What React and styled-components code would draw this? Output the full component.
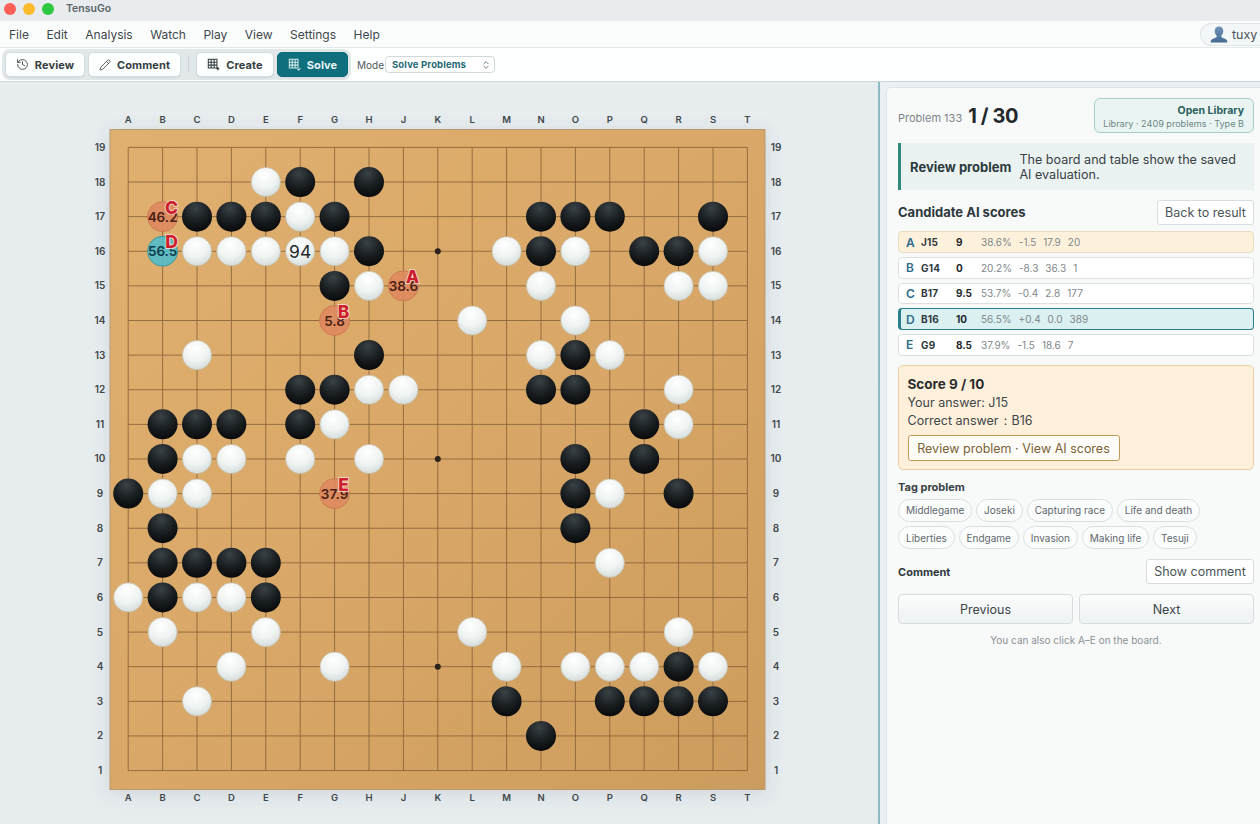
import React from 'react';
import styled, { createGlobalStyle } from 'styled-components';
import { History, Pencil, ChevronsUpDown } from 'lucide-react';

const Global = createGlobalStyle`
  html, body { margin: 0; padding: 0; height: 100%; }
  body { font-family: Inter, "Liberation Sans", sans-serif; color: #2b3236; overflow: hidden; background: #e8edf0; -webkit-font-smoothing: antialiased; }
  #root { height: 100%; }
  * { box-sizing: border-box; }
`;

const Shell = styled.div`
  width: 1260px; height: 824px; display: flex; flex-direction: column; overflow: hidden;
`;
const TitleBar = styled.div`
  height: 21px; background: #e8ecef; display: flex; align-items: center; padding: 0 0 4px 4px; gap: 7px; flex: none;
`;
const Light = styled.span`
  width: 12px; height: 12px; border-radius: 50%; background: ${p => p.$c};
`;
const AppName = styled.span`
  margin-left: 5px; font-size: 10.5px; font-weight: 600; color: #5c6468;
`;
const MenuBar = styled.div`
  height: 27px; background: #fbfdfd; border-bottom: 1px solid #e3e8ea; display: flex; align-items: center; padding-left: 9px; gap: 17.5px; flex: none; position: relative;
`;
const MenuItem = styled.span`
  font-size: 12px; color: #3e474c;
`;
const UserChip = styled.div`
  margin-left: auto; height: 23px; width: 60px; margin-right: 0; border: 1px solid #dfe5e8; border-right: none; border-radius: 12px 0 0 12px; background: #f4f7f8; display: flex; align-items: center; padding-left: 9px; gap: 4px; font-size: 12.5px; color: #4a5358;
`;
const ToolBar = styled.div`
  height: 34px; background: #fdfefe; border-bottom: 1px solid #ced6da; display: flex; align-items: center; padding-left: 2px; flex: none;
`;
const ToolGroup = styled.div`
  height: 31px; background: #e2e8ea; border-radius: 8px; display: flex; align-items: center; padding: 0 3px; gap: 3px;
`;
const ToolButton = styled.button`
  height: 25px; width: ${p => p.$w}px; border-radius: 5px; font-family: inherit; font-size: 11px; font-weight: 700;
  display: flex; align-items: center; justify-content: center; gap: 6px; padding: 0; letter-spacing: .1px;
  border: 1px solid ${p => (p.$active ? '#0d6a76' : '#d5dcdf')};
  background: ${p => (p.$active ? '#0f6f7c' : '#fdfefe')};
  color: ${p => (p.$active ? '#e8f5f6' : '#363e42')};
  box-shadow: 0 1px 1px rgba(40,60,70,.08);
`;
const ToolSep = styled.span`
  width: 1px; height: 17px; background: #ced5d8; margin: 0 4px;
`;
const ModeLabel = styled.span`
  font-size: 10px; color: #50595e; margin-left: 6px;
`;
const ModeSelect = styled.div`
  margin-left: 1px; width: 110px; height: 17px; border: 1px solid #cfd8db; border-radius: 4px; background: #fff; display: flex; align-items: center; justify-content: space-between; padding: 0 3px 0 6px; font-size: 9.5px; font-weight: 700; color: #1f6a76; letter-spacing: .15px;
`;
const Main = styled.div`
  flex: 1; display: flex; min-height: 0;
`;
const BoardArea = styled.div`
  width: 878px; flex: none; background: linear-gradient(180deg, #e8edf0, #e7ecef); padding: 22px 0 0 85px;
`;
const BoardSvg = styled.svg`
  display: block; overflow: visible;
`;
const Splitter = styled.div`
  width: 2px; flex: none; background: #8fb9c1;
`;
const SideWrap = styled.div`
  flex: 1; background: #eaf0f3; padding: 5px 0 0 6px; min-width: 0;
`;
const Side = styled.div`
  height: 100%; background: #f8fafa; border: 1px solid #dfe5e7; border-right: none; border-bottom: none; border-radius: 5px 0 0 0; padding: 10px 6px 0 11px;
`;
const HeadRow = styled.div`
  display: flex; align-items: center; height: 35px;
`;
const ProblemLabel = styled.span`
  font-size: 11px; color: #7d8589; margin-top: 4px;
`;
const Count = styled.span`
  font-size: 20px; font-weight: 700; color: #22282b; margin-left: 6px; letter-spacing: -0.4px;
`;
const LibraryBox = styled.div`
  margin-left: auto; width: 160px; height: 35px; border: 1px solid #a9cdc8; border-radius: 6px; background: #eaf5f3; padding: 5px 9px 0 0; text-align: right;
`;
const LibraryTitle = styled.div`
  font-size: 10.5px; font-weight: 700; color: #2c5f5f; line-height: 13px;
`;
const LibrarySub = styled.div`
  font-size: 9.1px; color: #6c8786; line-height: 13px;
`;
const Notice = styled.div`
  margin-top: 10px; height: 47px; border-left: 3px solid #2f8a7c; background: #ebf3f2; display: flex; align-items: center; padding-left: 9px; gap: 8px;
`;
const NoticeTitle = styled.span`
  font-size: 13px; font-weight: 700; color: #2b3a3c; white-space: nowrap;
`;
const NoticeText = styled.span`
  font-size: 12.6px; line-height: 15px; color: #374145; width: 225px;
`;
const ScoreHead = styled.div`
  display: flex; align-items: center; justify-content: space-between; margin-top: 10px; height: 25px;
`;
const SectionTitle = styled.span`
  font-size: 13px; font-weight: 700; color: #2f383c; margin-top: -1px;
`;
const PlainButton = styled.button`
  width: ${p => p.$w}px; height: 25px; border: 1px solid #d8dee0; border-radius: 3px; background: #fff; font-family: inherit; font-size: 12.5px; color: #4b5559; padding: 0;
`;
const Rows = styled.div`
  display: flex; flex-direction: column; gap: 4px; margin-top: 6px;
`;
const Row = styled.div`
  height: ${p => (p.$tall ? 22 : 21.5)}px; border-radius: 4px; display: flex; align-items: center; font-size: 10px;
  padding-left: ${p => (p.$state === 'best' ? 5 : 7)}px;
  border: 1px solid ${p => (p.$state === 'mine' ? '#ebdcbf' : p.$state === 'best' ? '#2c7f8a' : '#dbe1e3')};
  border-left-width: ${p => (p.$state === 'best' ? 3 : 1)}px;
  background: ${p => (p.$state === 'mine' ? '#fdf1dc' : p.$state === 'best' ? '#daf0f1' : '#fff')};
`;
const RowKey = styled.span`
  width: 15px; font-size: 12px; font-weight: 600; color: #2f6d8a;
`;
const RowMove = styled.span`
  width: 35px; font-weight: 700; color: #30383c; letter-spacing: .2px;
`;
const RowScore = styled.span`
  width: 25px; font-weight: 700; color: #22282b;
`;
const RowStat = styled.span`
  margin-right: 7px; color: #7f878a;
`;
const ScoreBox = styled.div`
  margin-top: 9.5px; height: 105px; border: 1px solid #ebcfa2; border-radius: 5px; background: #fff0dc; padding: 9px 0 0 8.5px;
`;
const ScoreTitle = styled.div`
  font-size: 13.5px; font-weight: 700; color: #2a2d2e; line-height: 18.5px;
`;
const ScoreLine = styled.div`
  font-size: 12.5px; color: #40474a; line-height: 18px;
`;
const ReviewButton = styled.button`
  margin-top: 5.5px; display: block; width: 212px; height: 26px; border: 1px solid #c49a5c; border-radius: 3px; background: #fffdf9; font-family: inherit; font-size: 12.5px; color: #7a6238; padding: 0;
`;
const TagTitle = styled.div`
  margin-top: 10px; font-size: 11px; font-weight: 700; color: #394246; line-height: 14px;
`;
const Tags = styled.div`
  display: flex; flex-wrap: wrap; gap: 4.6px 3.8px; margin-top: 4.5px; width: 330px;
`;
const Tag = styled.span`
  height: 23px; padding: 0 7px; border: 1px solid #d9dfe1; border-radius: 12px; background: #fbfcfc; font-size: 10px; color: #5f686c; display: inline-flex; align-items: center;
`;
const CommentRow = styled.div`
  display: flex; align-items: center; justify-content: space-between; margin-top: 10px; height: 25px;
`;
const CommentLabel = styled.span`
  font-size: 11px; font-weight: 700; color: #2f383c;
`;
const NavRow = styled.div`
  display: flex; gap: 6px; margin-top: 10px;
`;
const NavButton = styled.button`
  flex: 1; height: 30px; border: 1px solid #d6dcdf; border-radius: 4px; background: linear-gradient(180deg, #fbfcfc, #eef2f3); font-family: inherit; font-size: 12.5px; color: #3c4548; padding: 0;
`;
const Hint = styled.div`
  margin-top: 10px; text-align: center; font-size: 10px; color: #8b9295;
`;

const COLS = 'ABCDEFGHJKLMNOPQRST'.split('');
const X0 = 43.2, DX = 34.4, Y0 = 43.4, DY = 34.62;
const BX = 25, BY = 25.5, BW = 655, BH = 660;
const cx = c => X0 + COLS.indexOf(c) * DX;
const cy = r => Y0 + (19 - r) * DY;

const BLACK = 'F18 H18 C17 D17 E17 G17 N17 O17 P17 S17 H16 N16 Q16 R16 G15 H13 O13 F12 G12 N12 O12 B11 C11 D11 F11 Q11 B10 O10 Q10 A9 O9 R9 B8 O8 B7 C7 D7 E7 B6 E6 R4 M3 P3 Q3 R3 S3 N2'.split(' ');
const WHITE = 'E18 F17 C16 D16 E16 G16 M16 O16 S16 H15 N15 R15 S15 L14 O14 C13 N13 P13 H12 J12 R12 G11 R11 C10 D10 F10 H10 B9 C9 P9 P7 A6 C6 D6 B5 E5 L5 R5 D4 G4 M4 O4 P4 Q4 S4 C3'.split(' ');
const STARS = 'D16 K16 Q16 D10 K10 Q10 D4 K4 Q4'.split(' ');
const MARKS = [
  { at: 'J15', v: '38.6', k: 'A', c: '#de8a60', t: '#4a2015' },
  { at: 'G14', v: '5.8', k: 'B', c: '#de8a60', t: '#4a2015' },
  { at: 'B17', v: '46.2', k: 'C', c: '#de8a60', t: '#4a2015' },
  { at: 'B16', v: '56.5', k: 'D', c: '#56bcc6', t: '#0c3a4a' },
  { at: 'G9', v: '37.9', k: 'E', c: '#de8a60', t: '#4a2015' },
];
const parse = s => [s[0], Number(s.slice(1))];

function Board() {
  const rows = Array.from({ length: 19 }, (_, i) => 19 - i);
  const mono = { fontFamily: 'Inter, "Liberation Sans", sans-serif' };
  return (
    <BoardSvg width="710" height="710" viewBox="0 0 710 710">
      <defs>
        <radialGradient id="bs" cx="45%" cy="22%" r="78%">
          <stop offset="0%" stopColor="#3a4245" />
          <stop offset="50%" stopColor="#1c2124" />
          <stop offset="100%" stopColor="#08090a" />
        </radialGradient>
        <radialGradient id="ws" cx="45%" cy="28%" r="78%">
          <stop offset="0%" stopColor="#ffffff" />
          <stop offset="55%" stopColor="#eff3f2" />
          <stop offset="100%" stopColor="#cfd9d7" />
        </radialGradient>
        <linearGradient id="wood" x1="0" y1="0" x2="1" y2="1">
          <stop offset="0%" stopColor="#e0b070" />
          <stop offset="50%" stopColor="#d9a868" />
          <stop offset="100%" stopColor="#cc9c5e" />
        </linearGradient>
        <filter id="bshadow" x="-6%" y="-6%" width="112%" height="112%">
          <feDropShadow dx="0" dy="3" stdDeviation="9" floodColor="#4a5a66" floodOpacity=".16" />
        </filter>
      </defs>
      <rect x={BX} y={BY} width={BW} height={BH} fill="url(#wood)" stroke="#b99a72" strokeWidth="1" filter="url(#bshadow)" />
      {rows.map(r => (
        <line key={r} x1={X0} x2={X0 + 18 * DX} y1={cy(r)} y2={cy(r)} stroke="#8a6236" strokeWidth="1" opacity=".85" />
      ))}
      {COLS.map(c => (
        <line key={c} y1={Y0} y2={Y0 + 18 * DY} x1={cx(c)} x2={cx(c)} stroke="#8a6236" strokeWidth="1" opacity=".85" />
      ))}
      {STARS.map(s => {
        const [c, r] = parse(s);
        return <circle key={s} cx={cx(c)} cy={cy(r)} r="3" fill="#2a2118" />;
      })}
      {COLS.map(c => (
        <g key={c} style={mono} fontSize="9.5" fontWeight="600" fill="#40474a" textAnchor="middle">
          <text x={cx(c)} y="19">{c}</text>
          <text x={cx(c)} y="697">{c}</text>
        </g>
      ))}
      {rows.map(r => (
        <g key={r} style={mono} fontSize="10" fontWeight="600" fill="#40474a" textAnchor="middle">
          <text x="15" y={cy(r) + 3.5}>{r}</text>
          <text x="691" y={cy(r) + 3.5}>{r}</text>
        </g>
      ))}
      {BLACK.map(s => {
        const [c, r] = parse(s);
        return <circle key={s} cx={cx(c)} cy={cy(r)} r="15" fill="url(#bs)" />;
      })}
      {WHITE.map(s => {
        const [c, r] = parse(s);
        return <circle key={s} cx={cx(c)} cy={cy(r)} r="14.6" fill="url(#ws)" stroke="#c5bba6" strokeWidth=".7" />;
      })}
      <circle cx={cx('F')} cy={cy(16)} r="14.6" fill="url(#ws)" stroke="#c5bba6" strokeWidth=".7" />
      <text x={cx('F')} y={cy(16) + 6.5} style={mono} fontSize="17.5" fill="#23292c" textAnchor="middle">94</text>
      {MARKS.map(m => {
        const [c, r] = parse(m.at);
        const x = cx(c), y = cy(r);
        return (
          <g key={m.k}>
            <circle cx={x} cy={y} r="15" fill={m.c} fillOpacity=".93" stroke={m.t === '#0c3a4a' ? '#2f8f9c' : '#c9754e'} strokeWidth=".8" />
            <text x={x} y={y + 5} style={mono} fontSize="13.5" fontWeight="600" fill={m.t} textAnchor="middle">{m.v}</text>
            <text x={x + 9} y={y - 3} style={mono} fontSize="17.5" fontWeight="800" fill="#cf1f2e" stroke="#f4e3d4" strokeWidth="1.6" paintOrder="stroke" textAnchor="middle">{m.k}</text>
          </g>
        );
      })}
    </BoardSvg>
  );
}

const GridGlyph = ({ color, mark }) => (
  <svg width="13" height="13" viewBox="0 0 15 15" fill="none" stroke={color} strokeWidth="1.2">
    <rect x="1.5" y="1.5" width="10" height="10" />
    <path d="M4.8 1.5v10M8.2 1.5v10M1.5 4.8h10M1.5 8.2h10" />
    {mark === 'plus' && <path d="M12.5 10.5v3.5M10.8 12.2h3.4" strokeWidth="1.3" />}
    {mark === 'check' && <path d="M11 13l1.3 1 2-2.5" strokeWidth="1.2" />}
  </svg>
);

const UserGlyph = () => (
  <svg width="18" height="17" viewBox="0 0 18 17">
    <defs>
      <linearGradient id="ug" x1="0" y1="0" x2="0" y2="1">
        <stop offset="0%" stopColor="#6f93b8" />
        <stop offset="100%" stopColor="#456a90" />
      </linearGradient>
    </defs>
    <path fill="url(#ug)" d="M9 .5c2.7 0 4.3 2 4.3 4.6 0 2-.9 3.7-2 4.6v1.2c.3.6 3.9 1.5 5.2 2.8.7.7.8 1.9.8 2.8H.7c0-.9.1-2.1.8-2.8 1.3-1.3 4.9-2.2 5.2-2.8V9.7c-1.1-.9-2-2.6-2-4.6C4.7 2.5 6.3.5 9 .5z" />
  </svg>
);

const ROWS = [
  { k: 'A', m: 'J15', s: '9', st: ['38.6%', '-1.5', '17.9', '20'], state: 'mine' },
  { k: 'B', m: 'G14', s: '0', st: ['20.2%', '-8.3', '36.3', '1'] },
  { k: 'C', m: 'B17', s: '9.5', st: ['53.7%', '-0.4', '2.8', '177'] },
  { k: 'D', m: 'B16', s: '10', st: ['56.5%', '+0.4', '0.0', '389'], state: 'best' },
  { k: 'E', m: 'G9', s: '8.5', st: ['37.9%', '-1.5', '18.6', '7'] },
];
const TAGS = ['Middlegame', 'Joseki', 'Capturing race', 'Life and death', 'Liberties', 'Endgame', 'Invasion', 'Making life', 'Tesuji'];
const MENU = ['File', 'Edit', 'Analysis', 'Watch', 'Play', 'View', 'Settings', 'Help'];

export default function App() {
  return (
    <Shell>
      <Global />
      <TitleBar>
        <Light $c="#fb5f57" />
        <Light $c="#fdbc2e" />
        <Light $c="#2ec840" />
        <AppName>TensuGo</AppName>
      </TitleBar>
      <MenuBar>
        {MENU.map(m => <MenuItem key={m}>{m}</MenuItem>)}
        <UserChip><UserGlyph />tuxy</UserChip>
      </MenuBar>
      <ToolBar>
        <ToolGroup>
          <ToolButton $w={80}><History size={13} strokeWidth={1.6} />Review</ToolButton>
          <ToolButton $w={93}><Pencil size={12} strokeWidth={1.6} />Comment</ToolButton>
          <ToolSep />
          <ToolButton $w={78}><GridGlyph color="#363e42" mark="plus" />Create</ToolButton>
          <ToolButton $w={71} $active><GridGlyph color="#d5eced" mark="check" />Solve</ToolButton>
        </ToolGroup>
        <ModeLabel>Mode</ModeLabel>
        <ModeSelect>Solve Problems<ChevronsUpDown size={10} color="#55606a" /></ModeSelect>
      </ToolBar>
      <Main>
        <BoardArea><Board /></BoardArea>
        <Splitter />
        <SideWrap>
          <Side>
            <HeadRow>
              <ProblemLabel>Problem 133</ProblemLabel>
              <Count>1 / 30</Count>
              <LibraryBox>
                <LibraryTitle>Open Library</LibraryTitle>
                <LibrarySub>Library · 2409 problems · Type B</LibrarySub>
              </LibraryBox>
            </HeadRow>
            <Notice>
              <NoticeTitle>Review problem</NoticeTitle>
              <NoticeText>The board and table show the saved AI evaluation.</NoticeText>
            </Notice>
            <ScoreHead>
              <SectionTitle>Candidate AI scores</SectionTitle>
              <PlainButton $w={97}>Back to result</PlainButton>
            </ScoreHead>
            <Rows>
              {ROWS.map(r => (
                <Row key={r.k} $state={r.state} $tall={r.state}>
                  <RowKey>{r.k}</RowKey>
                  <RowMove>{r.m}</RowMove>
                  <RowScore>{r.s}</RowScore>
                  {r.st.map((v, i) => <RowStat key={i}>{v}</RowStat>)}
                </Row>
              ))}
            </Rows>
            <ScoreBox>
              <ScoreTitle>Score 9 / 10</ScoreTitle>
              <ScoreLine>Your answer: J15</ScoreLine>
              <ScoreLine>Correct answer：B16</ScoreLine>
              <ReviewButton>Review problem · View AI scores</ReviewButton>
            </ScoreBox>
            <TagTitle>Tag problem</TagTitle>
            <Tags>{TAGS.map(t => <Tag key={t}>{t}</Tag>)}</Tags>
            <CommentRow>
              <CommentLabel>Comment</CommentLabel>
              <PlainButton $w={108}>Show comment</PlainButton>
            </CommentRow>
            <NavRow>
              <NavButton>Previous</NavButton>
              <NavButton>Next</NavButton>
            </NavRow>
            <Hint>You can also click A–E on the board.</Hint>
          </Side>
        </SideWrap>
      </Main>
    </Shell>
  );
}
